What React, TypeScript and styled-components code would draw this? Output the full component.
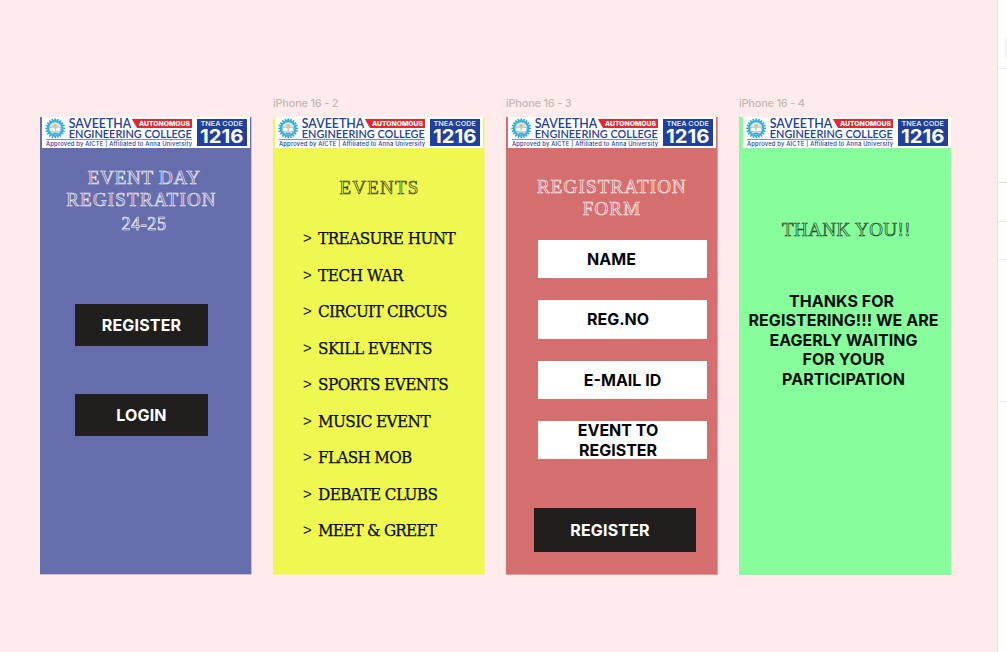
import React from "react";
import styled, { createGlobalStyle } from "styled-components";

const GlobalStyle = createGlobalStyle`
  * { box-sizing: border-box; }
  body { margin: 0; background: #ffebeb; font-family: Inter, "Liberation Sans", sans-serif; }
`;

const Page = styled.div`
  display: flex;
  width: 1007px;
  height: 652px;
  overflow: hidden;
`;

const Canvas = styled.main`
  display: flex;
  gap: 21px;
  flex: 1;
  padding: 96px 0 0 40px;
  background: #ffebeb;
`;

const Inspector = styled.aside`
  display: flex;
  flex-direction: column;
  width: 10px;
  border-left: 1px solid #e3e3e3;
  background: #fff;
`;

const InspectorSection = styled.div<{ $height: number; $line: string }>`
  display: flex;
  flex-direction: column;
  align-items: flex-end;
  height: ${(p) => p.$height}px;
  border-bottom: 1px solid ${(p) => p.$line};
`;

const InspectorChip = styled.div`
  width: 2px;
  height: 20px;
  margin-top: 38px;
  border-radius: 2px 0 0 2px;
  background: #f3f3f3;
`;

const Artboard = styled.section`
  display: flex;
  flex-direction: column;
  width: 212px;
`;

const ArtboardLabel = styled.div`
  height: 21px;
  font-size: 11px;
  font-weight: 500;
  line-height: 15px;
  letter-spacing: -0.24px;
  color: #c8b8b8;
  white-space: pre;
`;

const Screen = styled.div<{ $color: string; $edge: string }>`
  display: flex;
  flex-direction: column;
  height: 458px;
  border-right: 1px solid ${(p) => p.$edge};
  border-bottom: 1px solid ${(p) => p.$edge};
  background: ${(p) => p.$color};
  background-clip: padding-box;
`;

const Banner = styled.svg<{ $inset: number }>`
  display: block;
  flex: none;
  margin-left: ${(p) => p.$inset}px;
  overflow: visible;
`;

const Title = styled.h1<{ $top: number; $color: string; $fill: string; $spacing?: number; $shift?: number }>`
  margin: ${(p) => p.$top}px 0 0 ${(p) => p.$shift ?? 0}px;
  font: 400 19px/22px "Liberation Serif", serif;
  letter-spacing: ${(p) => p.$spacing ?? 1.15}px;
  text-align: center;
  color: ${(p) => p.$fill};
  -webkit-text-stroke: 0.7px ${(p) => p.$color};
`;

const TitleLine = styled.span<{ $spacing: number }>`
  display: block;
  letter-spacing: ${(p) => p.$spacing}px;
`;

const Years = styled.span`
  display: block;
  padding: 2px 0 0 5px;
  font-size: 18px;
  letter-spacing: 0.6px;
`;

const ActionButton = styled.button<{ $top: number; $left: number; $width: number; $height: number; $pad?: number; $drop?: number }>`
  flex: none;
  width: ${(p) => p.$width}px;
  height: ${(p) => p.$height}px;
  margin: ${(p) => p.$top}px 0 0 ${(p) => p.$left}px;
  padding: ${(p) => p.$drop ?? 0}px ${(p) => p.$pad ?? 0}px 0 0;
  border: 0;
  background: #201f1d;
  color: #fff;
  font: 700 16px/19px Inter, sans-serif;
  letter-spacing: 0.15px;
  text-align: center;
`;

const EventList = styled.ul`
  display: flex;
  flex-direction: column;
  margin: 21px 0 0 30px;
  padding: 0;
  list-style: none;
`;

const EventItem = styled.li`
  display: flex;
  align-items: center;
  height: 36.5px;
  font: 400 17px/20px "DejaVu Serif Condensed", "DejaVu Serif", serif;
  font-stretch: condensed;
  white-space: pre;
  color: #0c0d04;
`;

const Marker = styled.span`
  width: 15px;
  font: 400 15px/20px "Liberation Sans", sans-serif;
`;

const EventName = styled.span<{ $spacing: number }>`
  letter-spacing: ${(p) => p.$spacing}px;
  -webkit-text-stroke: 0.25px #0c0d04;
`;

const Form = styled.form`
  display: flex;
  flex-direction: column;
  gap: 22px;
  margin: 20.5px 0 0 32px;
`;

const Field = styled.label<{ $pad: number }>`
  display: flex;
  align-items: center;
  justify-content: center;
  width: 169px;
  height: 38.3px;
  padding: 1.4px ${(p) => p.$pad}px 0 0;
  background: #fff;
  color: #050505;
  font: 700 16px/19.4px Inter, sans-serif;
  text-align: center;
  white-space: pre;
`;

const Message = styled.p`
  margin: 51px 0 0;
  padding-right: 2px;
  color: #03100a;
  font: 700 16px/19.4px Inter, sans-serif;
  letter-spacing: 0.04px;
  text-align: center;
  white-space: pre;
`;

const teeth = Array.from({ length: 20 }, (_, i) => i * 18);

function CollegeBanner({ inset }: { inset: number }) {
  return (
    <Banner $inset={inset} width={208} height={31} viewBox="0 0 208 31">
      <rect width="208" height="31" fill="#fff" />
      <g transform="translate(13.2 11.4)">
        {teeth.map((a) => (
          <rect key={a} x="-.8" y="-9.9" width="1.6" height="3" fill="#2ba6d2" transform={`rotate(${a})`} />
        ))}
        <circle r="7.2" fill="#cdebf5" stroke="#3fb0d8" strokeWidth="2.2" />
        <path d="M-5.4 -.8Q-2.5 -2 0 0Q2.5 -2 5.4 -.8V3.2Q2.5 2.2 0 4Q-2.5 2.2 -5.4 3.2Z" fill="#fff" stroke="#5b9ac8" strokeWidth=".5" />
        <circle cy="-2.6" r="1.9" fill="#f0bb62" />
        <path d="M0 0V3.6" stroke="#e0a070" strokeWidth=".8" />
        <path d="M-2.5 5H2.5" stroke="#3f6eb1" strokeWidth=".8" />
      </g>
      <g fill="#24419b" fontFamily="Lato, sans-serif">
        <text x="26.8" y="11" fontSize="13" fontWeight="600" textLength="62.5" lengthAdjust="spacingAndGlyphs">SAVEETHA</text>
        <text x="26.8" y="21" fontSize="11" fontWeight="600" textLength="123" lengthAdjust="spacingAndGlyphs">ENGINEERING COLLEGE</text>
        <text x="4" y="28.6" fontSize="5.8" fontWeight="500" fontFamily="Inter, sans-serif" textLength="146" lengthAdjust="spacing">Approved by AICTE | Affiliated to Anna University</text>
      </g>
      <path d="M4 22.5H150" stroke="#4d62aa" strokeWidth=".7" />
      <path d="M89.8 2H150V11H95Z" fill="#e02a2f" />
      <text x="97" y="9" fontSize="6.8" fontWeight="800" fontFamily="Inter, sans-serif" fill="#fff" textLength="51" lengthAdjust="spacingAndGlyphs">AUTONOMOUS</text>
      <rect x="155" y="2" width="50" height="27" fill="#21409a" />
      <text x="158.5" y="8.9" fontSize="6.8" fontWeight="600" fontFamily="Inter, sans-serif" fill="#dfe5f4" textLength="42.5" lengthAdjust="spacingAndGlyphs">TNEA CODE</text>
      <text x="158" y="26" fontSize="19.2" fontWeight="700" fontFamily="Inter, sans-serif" fill="#fff" textLength="43.5" lengthAdjust="spacingAndGlyphs">1216</text>
    </Banner>
  );
}

const events: [string, number][] = [
  ["TREASURE HUNT", -0.57],
  ["TECH WAR", -0.45],
  ["CIRCUIT CIRCUS", -0.75],
  ["SKILL EVENTS", -0.55],
  ["SPORTS EVENTS", -0.57],
  ["MUSIC EVENT", -0.6],
  ["FLASH MOB", -0.7],
  ["DEBATE CLUBS", -0.6],
  ["MEET & GREET", -0.8],
];

export default function App() {
  return (
    <Page>
      <GlobalStyle />
      <Canvas>
        <Artboard>
          <ArtboardLabel />
          <Screen $color="#666dad" $edge="#ccc0d6">
            <CollegeBanner inset={1.5} />
            <Title $top={19} $color="#e6e7f4" $fill="#666dad" $shift={-8}>
              <TitleLine $spacing={0.75}>{"\u00a0EVENT DAY"}</TitleLine>
              <TitleLine $spacing={1.2}>REGISTRATION</TitleLine>
              <Years>24-25</Years>
            </Title>
            <ActionButton $top={69} $left={35} $width={133} $height={42}>REGISTER</ActionButton>
            <ActionButton $top={48} $left={35} $width={133} $height={42}>LOGIN</ActionButton>
          </Screen>
        </Artboard>
        <Artboard>
          <ArtboardLabel>iPhone 16 - 2</ArtboardLabel>
          <Screen $color="#eff850" $edge="#f6f29b">
            <CollegeBanner inset={2} />
            <Title $top={29} $color="#3c3e14" $fill="#eff850" $spacing={1.2} $shift={2}>EVENTS</Title>
            <EventList>
              {events.map(([name, spacing]) => (
                <EventItem key={name}>
                  <Marker>&gt;</Marker>
                  <EventName $spacing={spacing}>{name}</EventName>
                </EventItem>
              ))}
            </EventList>
          </Screen>
        </Artboard>
        <Artboard>
          <ArtboardLabel>iPhone 16 - 3</ArtboardLabel>
          <Screen $color="#d56f6f" $edge="#e59a9a">
            <CollegeBanner inset={2} />
            <Title $top={27.5} $color="#f9e6e6" $fill="#d56f6f" $shift={1}>REGISTRATION<br />FORM</Title>
            <Form>
              <Field $pad={22}>NAME</Field>
              <Field $pad={9}>REG.NO</Field>
              <Field $pad={0}>E-MAIL ID</Field>
              <Field $pad={9}>{"EVENT TO\nREGISTER"}</Field>
            </Form>
            <ActionButton $top={48.6} $left={28} $width={162} $height={44} $pad={10} $drop={1}>REGISTER</ActionButton>
          </Screen>
        </Artboard>
        <Artboard>
          <ArtboardLabel>iPhone 16 - 4</ArtboardLabel>
          <Screen $color="#88fd9b" $edge="#88fd9b">
            <CollegeBanner inset={4} />
            <Title $top={71} $color="#1f4a2b" $fill="#88fd9b" $spacing={0.4} $shift={4}>THANK YOU!!</Title>
            <Message>{"THANKS FOR \nREGISTERING!!! WE ARE\nEAGERLY WAITING\nFOR YOUR\nPARTICIPATION"}</Message>
          </Screen>
        </Artboard>
      </Canvas>
      <Inspector>
        <InspectorSection $height={69} $line="#eeeeee"><InspectorChip /></InspectorSection>
        <InspectorSection $height={114} $line="#e0e0e0" />
        <InspectorSection $height={39} $line="#e9e9e9" />
        <InspectorSection $height={38} $line="#eeeeee" />
        <InspectorSection $height={142} $line="#eeeeee" />
      </Inspector>
    </Page>
  );
}
